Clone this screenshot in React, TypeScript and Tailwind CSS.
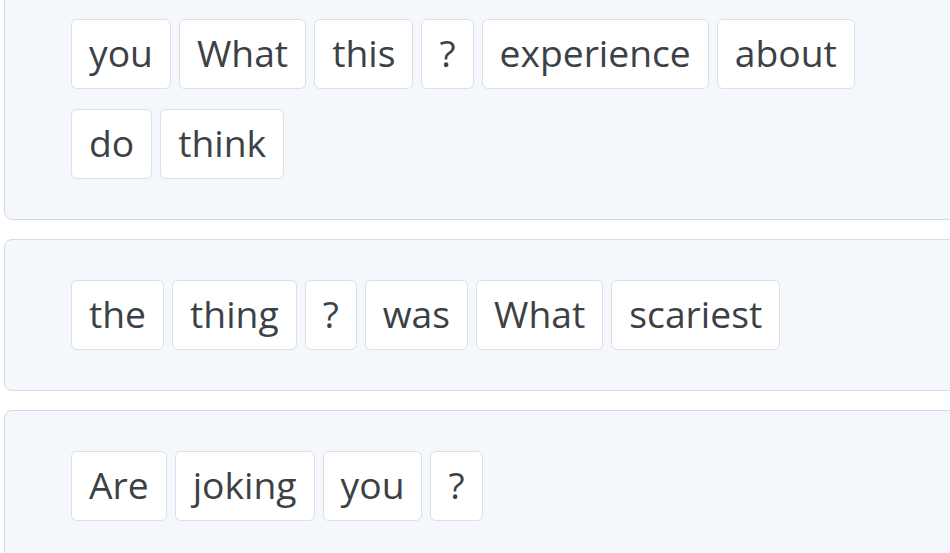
import React from "react";

const groups: string[][] = [
  ["you", "What", "this", "?", "experience", "about", "do", "think"],
  ["the", "thing", "?", "was", "What", "scariest"],
  ["Are", "joking", "you", "?"],
];

function Chip({ word }: { word: string }) {
  return (
    <div className="border border-[#dcdfe3] rounded-[6px] bg-white px-[17px] pt-[6px] pb-[8px] text-[37.25px] leading-[54px] text-[#3c4146]">
      {word}
    </div>
  );
}

export default function App() {
  return (
    <div
      className="w-[950px] h-[553px] overflow-hidden bg-white"
      style={{ fontFamily: '"Open Sans", sans-serif' }}
    >
      <div className="flex flex-col gap-[19px] pl-[4px] -mt-[22px]">
        {groups.map((g, i) => (
          <div
            key={i}
            className="w-[1000px] border border-[#d6dbe0] rounded-[8px] bg-[#f4f8fc] py-[40px] pl-[66px]"
          >
            <div className="flex flex-wrap gap-x-[8px] gap-y-[20px] w-[820px]">
              {g.map((w, j) => (
                <Chip key={j} word={w} />
              ))}
            </div>
          </div>
        ))}
      </div>
    </div>
  );
}
